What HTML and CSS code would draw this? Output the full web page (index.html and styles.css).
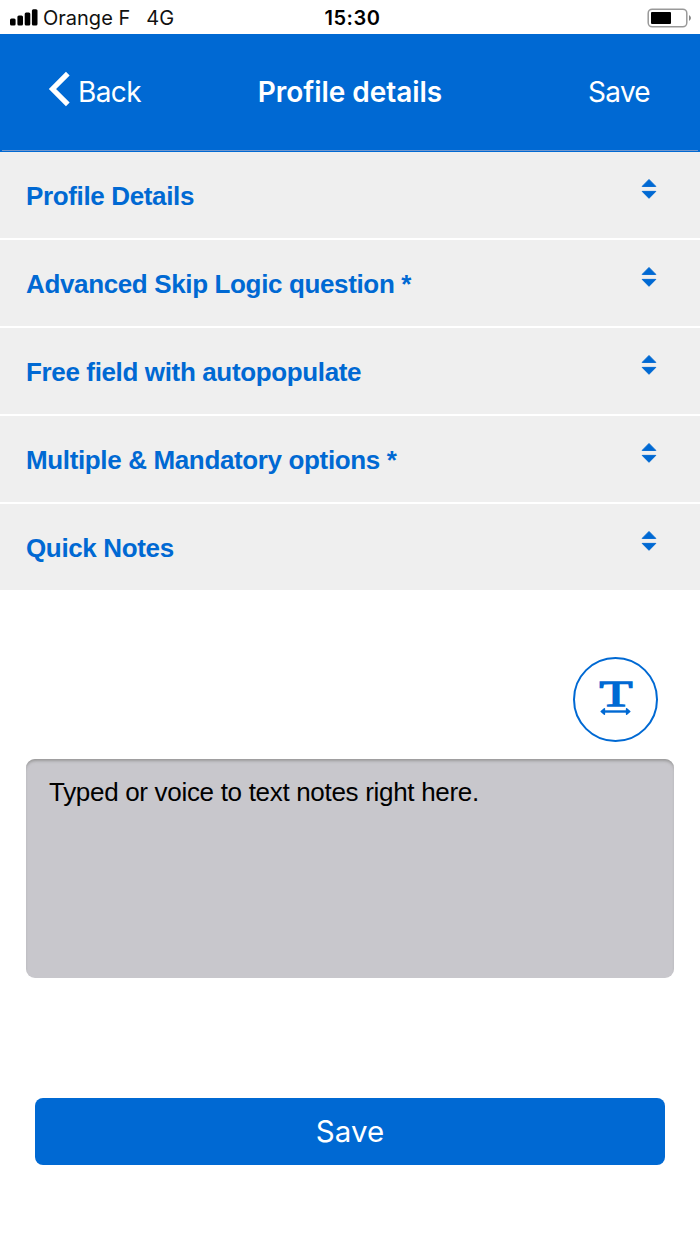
FILE: index.html
```html
<!DOCTYPE html>
<html lang="en">
<head>
  <meta charset="UTF-8">
  <title>Profile details</title>
  <link rel="stylesheet" href="styles.css">
</head>
<body>

<div class="status-bar">
  <div class="carrier">
    <svg class="signal" width="28" height="18" viewBox="0 0 28 18">
      <rect x="0" y="9.5" width="5.6" height="7" rx="1.5"/>
      <rect x="7.4" y="6.5" width="5.6" height="10" rx="1.5"/>
      <rect x="14.7" y="3.5" width="5.6" height="13" rx="1.5"/>
      <rect x="21.9" y="0.2" width="5.6" height="16.3" rx="1.5"/>
    </svg>
    <span class="carrier-name">Orange F</span>
    <span class="network">4G</span>
  </div>
  <div class="clock">15:30</div>
  <div class="battery">
    <svg width="45" height="20" viewBox="0 0 45 20">
      <rect x="1.2" y="1.2" width="38.6" height="17.6" rx="4" fill="none" stroke="#999" stroke-width="1.5"/>
      <rect x="4" y="4" width="20" height="12" rx="1"/>
      <path d="M42 7 Q46 10 42 13 Z" fill="#888"/>
    </svg>
  </div>
</div>

<div class="navbar">
  <div class="back">
    <svg width="22" height="36" viewBox="0 0 22 36">
      <path d="M19.8 2.6 L4.5 18 L19.8 33.4" fill="none" stroke="#fff" stroke-width="5.2"/>
    </svg>
    <span class="back-text">Back</span>
  </div>
  <div class="title">Profile details</div>
  <div class="nav-save">Save</div>
</div>

<div class="sections">
  <div class="section">
    <span>Profile Details</span>
    <svg class="sort" width="16" height="22" viewBox="0 -1 16 22"><path d="M8 0.5 L14.8 7.4 H1.2 Z M8 19.3 L14.8 12.4 H1.2 Z"/></svg>
  </div>
  <div class="section">
    <span>Advanced Skip Logic question *</span>
    <svg class="sort" width="16" height="22" viewBox="0 -1 16 22"><path d="M8 0.5 L14.8 7.4 H1.2 Z M8 19.3 L14.8 12.4 H1.2 Z"/></svg>
  </div>
  <div class="section">
    <span>Free field with autopopulate</span>
    <svg class="sort" width="16" height="22" viewBox="0 -1 16 22"><path d="M8 0.5 L14.8 7.4 H1.2 Z M8 19.3 L14.8 12.4 H1.2 Z"/></svg>
  </div>
  <div class="section">
    <span>Multiple &amp; Mandatory options *</span>
    <svg class="sort" width="16" height="22" viewBox="0 -1 16 22"><path d="M8 0.5 L14.8 7.4 H1.2 Z M8 19.3 L14.8 12.4 H1.2 Z"/></svg>
  </div>
  <div class="section">
    <span>Quick Notes</span>
    <svg class="sort" width="16" height="22" viewBox="0 -1 16 22"><path d="M8 0.5 L14.8 7.4 H1.2 Z M8 19.3 L14.8 12.4 H1.2 Z"/></svg>
  </div>
</div>

<div class="notes">
  <button class="text-button">
    <svg width="60" height="68" viewBox="-14 -16 60 68">
      <text class="text-letter" x="-0.5" y="23.8" textLength="33" lengthAdjust="spacingAndGlyphs">T</text>
      <path d="M4 29.5 H27" stroke-width="2.4"/>
      <path d="M1.2 29.5 L4.4 26.7 V32.3 Z M29.8 29.5 L26.6 26.7 V32.3 Z" stroke-width="1.5" stroke-linejoin="round"/>
    </svg>
  </button>
  <div class="note-box">Typed or voice to text notes right here.</div>
  <button class="save-button">Save</button>
</div>

</body>
</html>
```

FILE: styles.css
```css
* { box-sizing: border-box; }
body { margin: 0; background: #fff; font-family: "Liberation Sans", Arial, sans-serif; }
svg { display: block; }

.status-bar {
  display: grid; grid-template-columns: 1fr auto 1fr; align-items: center;
  height: 34px; padding: 1px 8px 0 10px;
  font-family: Inter, sans-serif; font-size: 20px; line-height: 34px; color: #111;
}
.carrier { display: flex; align-items: center; }
.carrier-name { margin-left: 5px; }
.network { margin-left: 16px; }
.clock { padding-left: 3px; font-weight: 600; letter-spacing: 0.5px; color: #000; }
.battery { display: flex; justify-content: flex-end; margin-top: -1px; }

.navbar {
  display: grid; grid-template-columns: 1fr auto 1fr; align-items: center;
  height: 118px; padding: 0 50px 3px 48px;
  background: linear-gradient(#7297cc, #7297cc) 2px 116px / 696px 1px no-repeat #0069d3;
  font-family: Inter, sans-serif; font-size: 28px; color: #fff;
}
.back { display: flex; align-items: center; }
.back svg { margin-top: -5px; }
.back-text { margin-left: 8px; letter-spacing: -0.6px; }
.title { padding-left: 2px; font-weight: 600; letter-spacing: -0.05px; }
.nav-save { text-align: right; letter-spacing: -0.7px; }

.section {
  display: flex; justify-content: space-between;
  height: 88px; padding: 27px 43px 0 26px;
  background: #efefef; border-bottom: 2px solid #fff;
  font-size: 26px; font-weight: bold; line-height: 34px; letter-spacing: -0.36px; color: #0069d3;
}
.sort { margin-top: -1px; fill: #0069d3; stroke: #0069d3; stroke-linejoin: round; }

.notes { display: flex; flex-direction: column; padding: 65px 26px 0; }
.text-button {
  display: flex; align-items: center; justify-content: center; align-self: flex-end;
  width: 85px; height: 85px; margin-right: 16px; padding: 0;
  background: #fff; border: 2px solid #0069d3; border-radius: 50%;
}
.text-button path { fill: #0069d3; stroke: #0069d3; }
.text-letter { font: 36px "Liberation Serif", serif; fill: #0069d3; stroke: #0069d3; stroke-width: 1.3; }
.note-box {
  height: 219px; margin-top: 17px; padding: 18px 23px;
  background: #c8c7cc; border-radius: 9px; box-shadow: inset 0 3px 3px -1px #999;
  font-size: 26px; line-height: 30px; letter-spacing: -0.31px; color: #000;
}
.save-button {
  height: 67px; margin: 120px 9px 0; padding: 0 0 2px;
  background: #0069d3; border: 0; border-radius: 8px;
  font-family: Inter, sans-serif; font-size: 29.5px; color: #fff;
}
```
